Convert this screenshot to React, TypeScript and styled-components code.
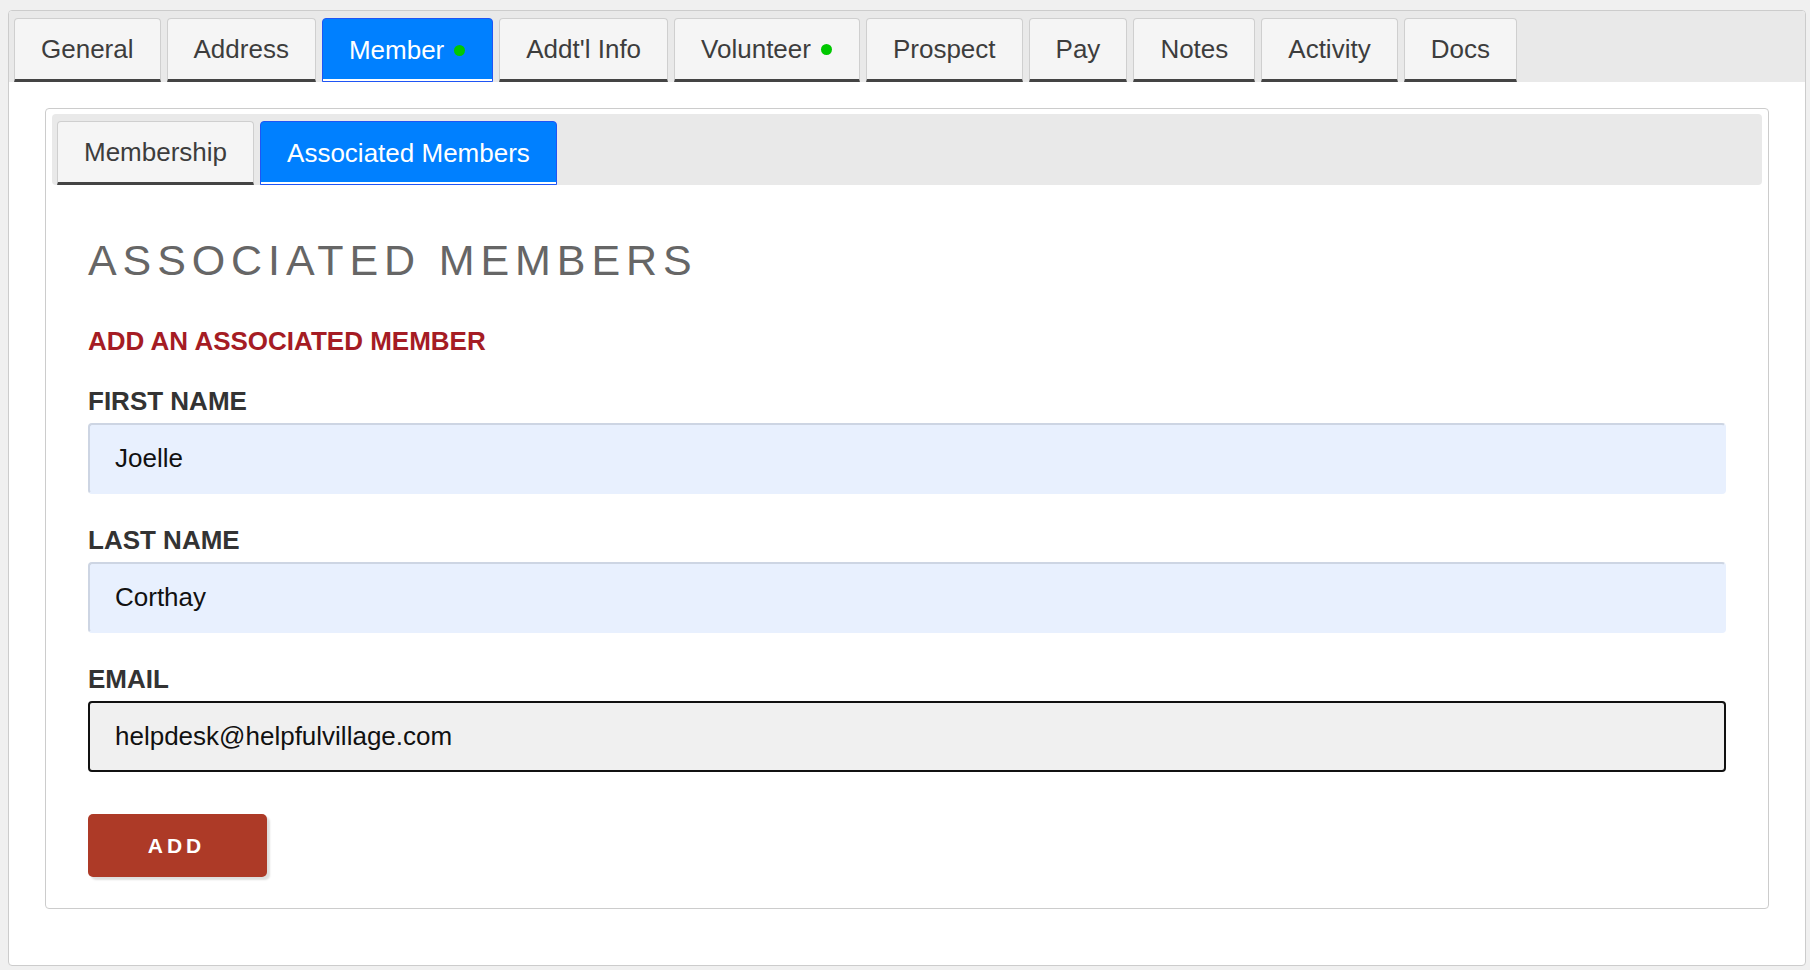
import styled, { createGlobalStyle } from "styled-components";

const GlobalStyle = createGlobalStyle`
  html, body {
    margin: 0;
    padding: 0;
    background: #f0f0f0;
    font-family: "Liberation Sans", Arial, sans-serif;
  }
  * {
    box-sizing: border-box;
  }
`;

const mainTabs = [
  { label: "General" },
  { label: "Address" },
  { label: "Member", active: true, dot: true },
  { label: "Addt'l Info" },
  { label: "Volunteer", dot: true },
  { label: "Prospect" },
  { label: "Pay" },
  { label: "Notes" },
  { label: "Activity" },
  { label: "Docs" },
];

const subTabs = [
  { label: "Membership" },
  { label: "Associated Members", active: true },
];

const fields = [
  { label: "FIRST NAME", value: "Joelle", autofill: true },
  { label: "LAST NAME", value: "Corthay", autofill: true },
  { label: "EMAIL", value: "helpdesk@helpfulvillage.com", autofill: false },
];

function App() {
  return (
    <>
      <GlobalStyle />
      <Page>
        <OuterPanel>
          <TabBar>
            {mainTabs.map((t) => (
              <Tab key={t.label} $active={t.active}>
                {t.label}
                {t.dot && <Dot />}
              </Tab>
            ))}
          </TabBar>
          <OuterBody>
            <InnerPanel>
              <SubTabBar>
                {subTabs.map((t) => (
                  <Tab key={t.label} $active={t.active}>
                    {t.label}
                  </Tab>
                ))}
              </SubTabBar>
              <Form>
                <Heading>Associated Members</Heading>
                <SubHeading>Add an Associated Member</SubHeading>
                <Fields>
                  {fields.map((f) => (
                    <Field key={f.label}>
                      <Label>{f.label}</Label>
                      <Input $autofill={f.autofill} defaultValue={f.value} />
                    </Field>
                  ))}
                </Fields>
                <AddButton>ADD</AddButton>
              </Form>
            </InnerPanel>
          </OuterBody>
        </OuterPanel>
      </Page>
    </>
  );
}

export default App;

const Page = styled.div`
  padding: 10px 4px 4px 8px;
  min-height: 970px;
`;

const OuterPanel = styled.div`
  border: 1px solid #cccccc;
  border-radius: 4px;
  background: #ffffff;
  overflow: hidden;
`;

const TabBar = styled.div`
  display: flex;
  gap: 6px;
  padding: 7px 5px 0;
  background: #e9e9e9;
`;

const SubTabBar = styled(TabBar)`
  border-radius: 4px;
`;

const Tab = styled.div<{ $active?: boolean }>`
  height: 64px;
  display: flex;
  align-items: center;
  padding: 0 26px;
  font-size: 26px;
  white-space: nowrap;
  border-radius: 4px 4px 0 0;
  color: ${({ $active }) => ($active ? "#ffffff" : "#3d3d3d")};
  background: ${({ $active }) => ($active ? "#0080ff" : "#f5f5f5")};
  border: 1px solid ${({ $active }) => ($active ? "#1f55f5" : "#cfcfcf")};
  border-bottom: ${({ $active }) => ($active ? "1px solid #1f55f5" : "3px solid #444444")};
  box-shadow: ${({ $active }) => ($active ? "inset 0 -2px 0 #ffffff" : "none")};
`;

const Dot = styled.span`
  display: inline-block;
  width: 11px;
  height: 11px;
  margin-left: 10px;
  margin-right: 1px;
  border-radius: 50%;
  background: #00c800;
`;

const OuterBody = styled.div`
  padding: 26px 36px 56px;
`;

const InnerPanel = styled.div`
  border: 1px solid #cccccc;
  border-radius: 4px;
  padding: 5px 6px 31px;
`;

const Form = styled.div`
  display: flex;
  flex-direction: column;
  align-items: flex-start;
  padding: 52px 36px 0;
`;

const Heading = styled.h1`
  margin: 0;
  font-size: 43px;
  line-height: 47px;
  font-weight: normal;
  letter-spacing: 5.9px;
  text-transform: uppercase;
  color: #666666;
`;

const SubHeading = styled.h2`
  margin: 42px 0 0;
  font-size: 26px;
  line-height: 30px;
  font-weight: bold;
  text-transform: uppercase;
  color: #a51c24;
`;

const Fields = styled.div`
  align-self: stretch;
  display: flex;
  flex-direction: column;
  gap: 31px;
  margin-top: 30px;
`;

const Field = styled.div`
  display: flex;
  flex-direction: column;
  gap: 7px;
`;

const Label = styled.label`
  font-size: 26px;
  line-height: 30px;
  font-weight: bold;
  color: #333333;
`;

const Input = styled.input<{ $autofill?: boolean }>`
  width: 100%;
  height: 71px;
  padding: 0 25px;
  font-family: "Liberation Sans", Arial, sans-serif;
  font-size: 26px;
  color: #111111;
  border-radius: 4px;
  outline: none;
  border: 2px solid;
  background: ${({ $autofill }) => ($autofill ? "#e8f0fe" : "#f0f0f0")};
  border-color: ${({ $autofill }) =>
    $autofill ? "#cdd5e3 #e8f0fe #e8f0fe #cdd5e3" : "#111111"};
`;

const AddButton = styled.button`
  margin-top: 42px;
  width: 179px;
  height: 63px;
  border: none;
  border-radius: 5px;
  background: #ad3a27;
  color: #ffffff;
  font-family: "Liberation Sans", Arial, sans-serif;
  font-size: 21px;
  font-weight: bold;
  letter-spacing: 4px;
  padding-left: 4px;
  box-shadow: 3px 3px 2px rgba(0, 0, 0, 0.13);
  cursor: pointer;
`;
